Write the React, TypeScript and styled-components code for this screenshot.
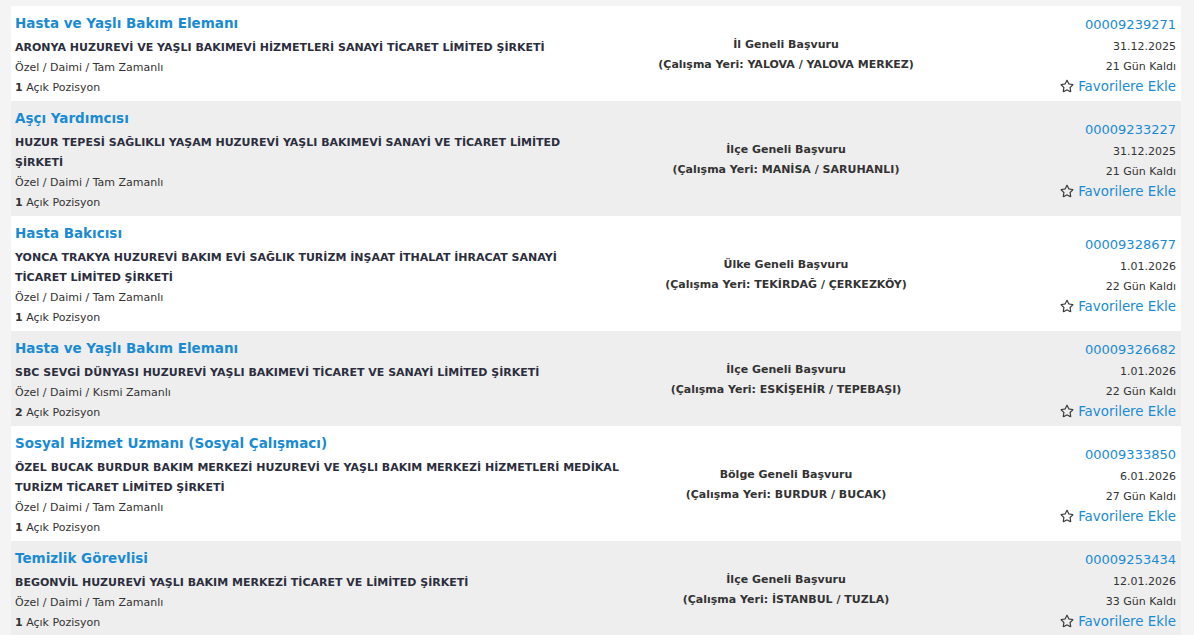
import React from "react";
import styled, { createGlobalStyle } from "styled-components";
import { FaRegStar } from "react-icons/fa";

const Global = createGlobalStyle`
  html, body { margin: 0; padding: 0; }
  body {
    background: #f4f4f4;
    font-family: "DejaVu Sans", Verdana, sans-serif;
    color: #333;
  }
`;

const Page = styled.div`
  padding: 6px 13px 0 11px;
`;

const List = styled.div`
  display: flex;
  flex-direction: column;
`;

const Row = styled.div<{ $alt: boolean }>`
  display: grid;
  grid-template-columns: 620px 302px 1fr;
  align-items: center;
  background: ${(p) => (p.$alt ? "#eeeeee" : "#ffffff")};
  padding: 4px 5px 3px 4px;
`;

const Left = styled.div`
  display: flex;
  flex-direction: column;
  align-self: start;
  padding-right: 4px;
`;

const Title = styled.a`
  color: #1a8bd3;
  font-weight: bold;
  font-size: 13.5px;
  line-height: 25px;
  padding-top: 1px;
  margin-bottom: 2px;
  text-decoration: none;
`;

const Company = styled.div`
  font-weight: bold;
  font-size: 11px;
  line-height: 20px;
  color: #2c2e3e;
  white-space: pre-line;
`;

const Meta = styled.div`
  font-size: 11px;
  line-height: 20px;
  color: #333;
  b { font-weight: bold; }
`;

const Center = styled.div`
  display: flex;
  flex-direction: column;
  align-items: center;
  text-align: center;
  font-weight: bold;
  font-size: 11px;
  line-height: 20px;
  color: #333;
  padding-top: 1px;
`;

const Right = styled.div`
  display: flex;
  flex-direction: column;
  align-items: flex-end;
  font-size: 11px;
  line-height: 20px;
  color: #333;
`;

const Code = styled.div`
  color: #1a8bd3;
  font-size: 13px;
  line-height: 24px;
`;

const Fav = styled.a`
  display: flex;
  align-items: center;
  gap: 4px;
  color: #1a8bd3;
  font-size: 13.4px;
  line-height: 19px;
  text-decoration: none;
  svg { color: #3a3a3a; }
`;

type Job = {
  title: string;
  company: string;
  type: string;
  count: number;
  scope: string;
  place: string;
  code: string;
  date: string;
  left: string;
};

const jobs: Job[] = [
  {
    title: "Hasta ve Yaşlı Bakım Elemanı",
    company: "ARONYA HUZUREVİ VE YAŞLI BAKIMEVİ HİZMETLERİ SANAYİ TİCARET LİMİTED ŞİRKETİ",
    type: "Özel / Daimi / Tam Zamanlı",
    count: 1,
    scope: "İl Geneli Başvuru",
    place: "YALOVA / YALOVA MERKEZ",
    code: "00009239271",
    date: "31.12.2025",
    left: "21 Gün Kaldı",
  },
  {
    title: "Aşçı Yardımcısı",
    company: "HUZUR TEPESİ SAĞLIKLI YAŞAM HUZUREVİ YAŞLI BAKIMEVİ SANAYİ VE TİCARET LİMİTED\nŞİRKETİ",
    type: "Özel / Daimi / Tam Zamanlı",
    count: 1,
    scope: "İlçe Geneli Başvuru",
    place: "MANİSA / SARUHANLI",
    code: "00009233227",
    date: "31.12.2025",
    left: "21 Gün Kaldı",
  },
  {
    title: "Hasta Bakıcısı",
    company: "YONCA TRAKYA HUZUREVİ BAKIM EVİ SAĞLIK TURİZM İNŞAAT İTHALAT İHRACAT SANAYİ\nTİCARET LİMİTED ŞİRKETİ",
    type: "Özel / Daimi / Tam Zamanlı",
    count: 1,
    scope: "Ülke Geneli Başvuru",
    place: "TEKİRDAĞ / ÇERKEZKÖY",
    code: "00009328677",
    date: "1.01.2026",
    left: "22 Gün Kaldı",
  },
  {
    title: "Hasta ve Yaşlı Bakım Elemanı",
    company: "SBC SEVGİ DÜNYASI HUZUREVİ YAŞLI BAKIMEVİ TİCARET VE SANAYİ LİMİTED ŞİRKETİ",
    type: "Özel / Daimi / Kısmi Zamanlı",
    count: 2,
    scope: "İlçe Geneli Başvuru",
    place: "ESKİŞEHİR / TEPEBAŞI",
    code: "00009326682",
    date: "1.01.2026",
    left: "22 Gün Kaldı",
  },
  {
    title: "Sosyal Hizmet Uzmanı (Sosyal Çalışmacı)",
    company: "ÖZEL BUCAK BURDUR BAKIM MERKEZİ HUZUREVİ VE YAŞLI BAKIM MERKEZİ HİZMETLERİ MEDİKAL\nTURİZM TİCARET LİMİTED ŞİRKETİ",
    type: "Özel / Daimi / Tam Zamanlı",
    count: 1,
    scope: "Bölge Geneli Başvuru",
    place: "BURDUR / BUCAK",
    code: "00009333850",
    date: "6.01.2026",
    left: "27 Gün Kaldı",
  },
  {
    title: "Temizlik Görevlisi",
    company: "BEGONVİL HUZUREVİ YAŞLI BAKIM MERKEZİ TİCARET VE LİMİTED ŞİRKETİ",
    type: "Özel / Daimi / Tam Zamanlı",
    count: 1,
    scope: "İlçe Geneli Başvuru",
    place: "İSTANBUL / TUZLA",
    code: "00009253434",
    date: "12.01.2026",
    left: "33 Gün Kaldı",
  },
];

export default function App() {
  return (
    <>
      <Global />
      <Page>
        <List>
          {jobs.map((j, i) => (
            <Row key={j.code} $alt={i % 2 === 1}>
              <Left>
                <Title href="#">{j.title}</Title>
                <Company>{j.company}</Company>
                <Meta>{j.type}</Meta>
                <Meta>
                  <b>{j.count}</b> Açık Pozisyon
                </Meta>
              </Left>
              <Center>
                <div>{j.scope}</div>
                <div>(Çalışma Yeri: {j.place})</div>
              </Center>
              <Right>
                <Code>{j.code}</Code>
                <div>{j.date}</div>
                <div>{j.left}</div>
                <Fav href="#">
                  <FaRegStar size={14} />
                  Favorilere Ekle
                </Fav>
              </Right>
            </Row>
          ))}
        </List>
      </Page>
    </>
  );
}
